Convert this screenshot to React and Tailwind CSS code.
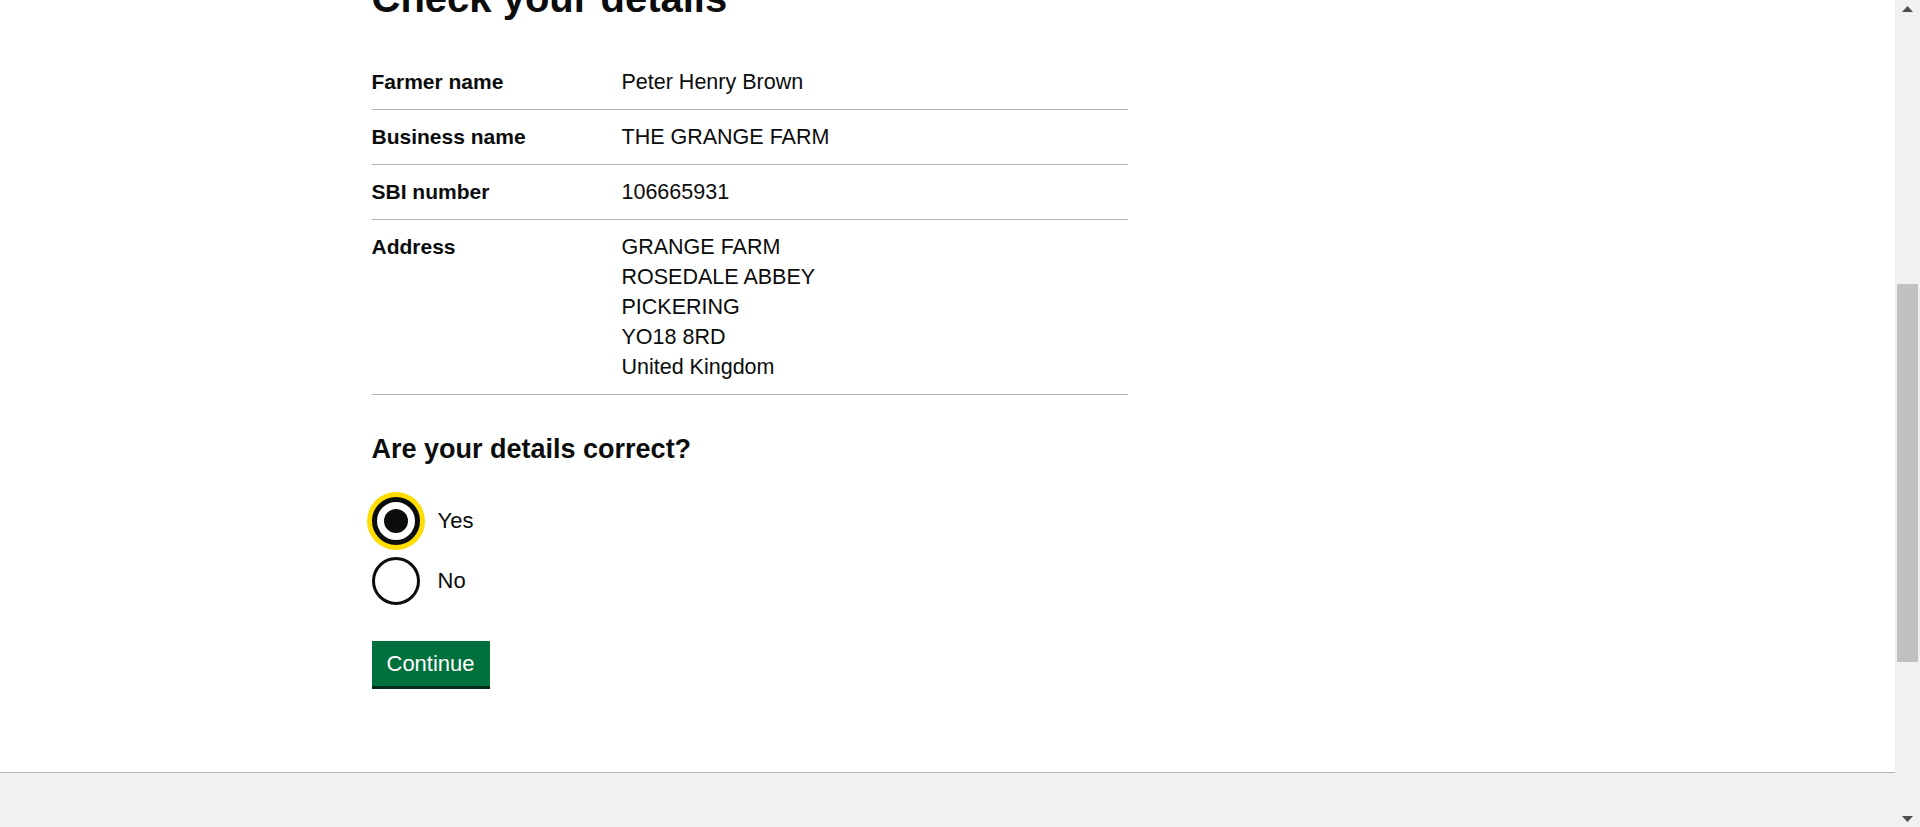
import React from "react";

const ROWS = [
  { key: "Farmer name", value: ["Peter Henry Brown"] },
  { key: "Business name", value: ["THE GRANGE FARM"] },
  { key: "SBI number", value: ["106665931"] },
  {
    key: "Address",
    value: ["GRANGE FARM", "ROSEDALE ABBEY", "PICKERING", "YO18 8RD", "United Kingdom"],
  },
];

function Radio({ label, checked }) {
  return (
    <label className="flex items-center">
      {checked ? (
        <span className="flex h-12 w-12 flex-none items-center justify-center rounded-full border-[5px] border-[#0b0c0c] bg-white ring-[5px] ring-[#ffdd00]">
          <span className="h-6 w-6 rounded-full bg-[#0b0c0c]" />
        </span>
      ) : (
        <span className="h-12 w-12 flex-none rounded-full border-[3px] border-[#0b0c0c] bg-white" />
      )}
      <span className="pl-[18px] text-[22px] leading-[30px]">{label}</span>
    </label>
  );
}

function Scrollbar() {
  return (
    <div className="flex w-[25px] flex-none flex-col items-center bg-[#f1f1f1]">
      <div className="flex h-[17px] w-full items-center justify-center">
        <svg width="11" height="6" viewBox="0 0 11 6">
          <path d="M0 6 L5.5 0 L11 6 Z" fill="#505050" />
        </svg>
      </div>
      <div className="mt-[267px] h-[378px] w-[21px] bg-[#c1c1c1]" />
      <div className="flex-1" />
      <div className="flex h-[17px] w-full items-center justify-center">
        <svg width="11" height="6" viewBox="0 0 11 6">
          <path d="M0 0 L11 0 L5.5 6 Z" fill="#505050" />
        </svg>
      </div>
    </div>
  );
}

export default function App() {
  return (
    <div className="flex h-[827px] overflow-hidden bg-white font-['Liberation_Sans',Arial,sans-serif] text-[#0b0c0c]">
      <div className="flex flex-1 flex-col">
        <main className="h-[772px] flex-none">
          <div className="mx-auto w-[1152px]">
            <div className="w-[756px]">
              <h1 className="mt-[-26px] mb-[33px] text-[40px] font-bold leading-[48px]">
                Check your details
              </h1>

              <dl className="mb-[38px]">
                {ROWS.map((r) => (
                  <div
                    key={r.key}
                    className="grid grid-cols-[250px_1fr] border-b border-[#b1b4b6] py-3 leading-[30px]"
                  >
                    <dt className="text-[21px] font-bold">{r.key}</dt>
                    <dd className="text-[21.5px]">
                      {r.value.map((v) => (
                        <div key={v}>{v}</div>
                      ))}
                    </dd>
                  </div>
                ))}
              </dl>

              <fieldset>
                <legend className="mb-[32px] text-[27px] font-bold leading-[32px]">
                  Are your details correct?
                </legend>
                <div className="flex flex-col gap-3">
                  <Radio label="Yes" checked />
                  <Radio label="No" />
                </div>
              </fieldset>

              <button className="mt-[36px] bg-[#00703c] px-[15px] pt-[12px] pb-[11px] text-[22px] leading-[22px] text-white shadow-[0_3px_0_#002d18]">
                Continue
              </button>
            </div>
          </div>
        </main>
        <footer className="flex-1 border-t border-[#b1b4b6] bg-[#f3f2f1]" />
      </div>
      <Scrollbar />
    </div>
  );
}
